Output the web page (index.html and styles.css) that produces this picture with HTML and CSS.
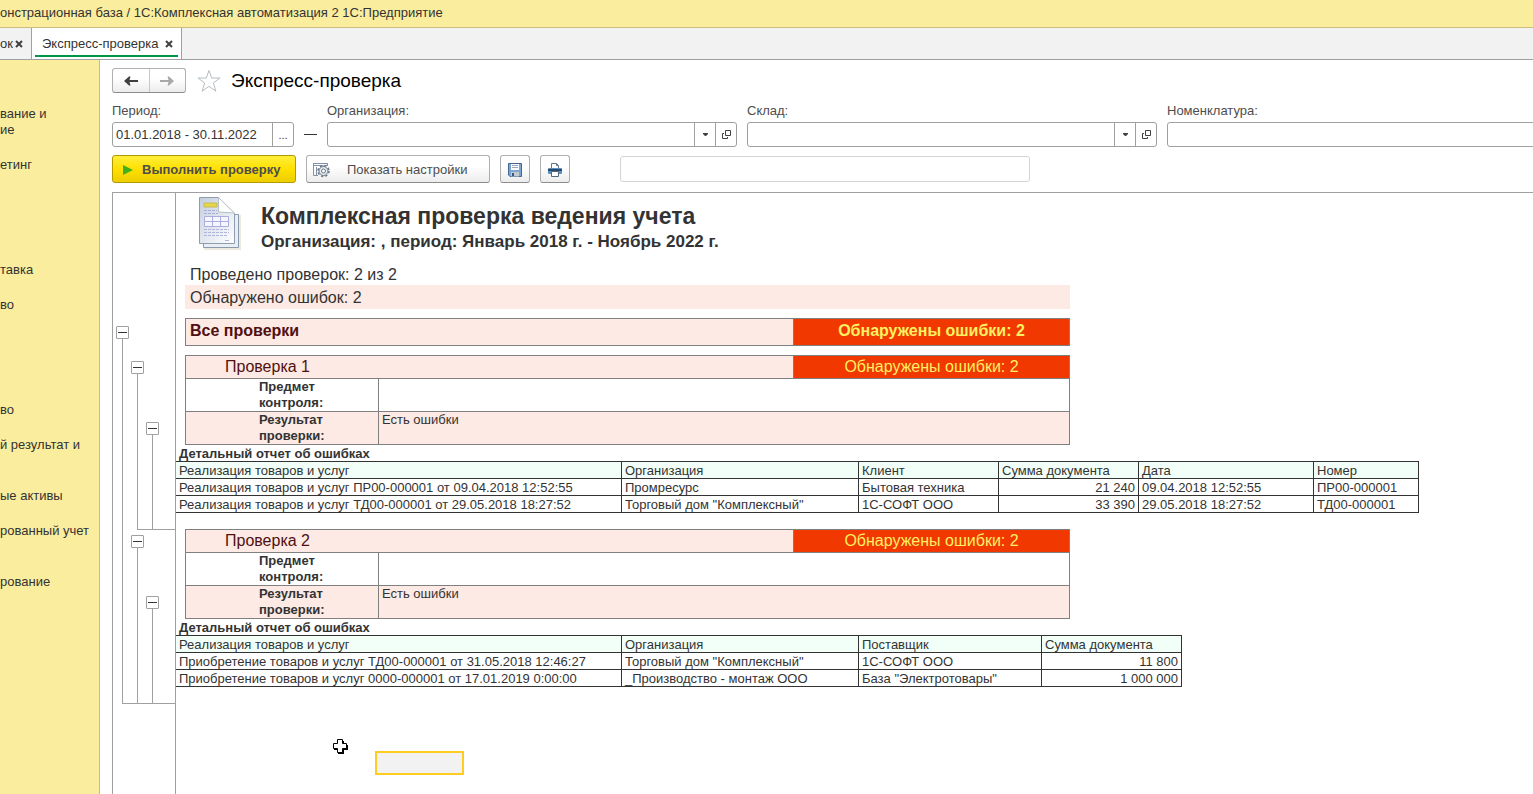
FILE: index.html
```html
<!DOCTYPE html>
<html lang="ru">
<head>
    <meta charset="UTF-8">
    <meta name="viewport" content="width=device-width, initial-scale=1.0">
    <title>Экспресс-проверка</title>
    <link rel="stylesheet" href="styles.css">
</head>
<body>
    <header class="titlebar">онстрационная база / 1С:Комплексная автоматизация 2 1С:Предприятие</header>

    <nav class="tabs">
        <div class="tab tab-cut">
            <span>ок</span>
            <button class="tab-close" aria-label="Закрыть"><svg width="8" height="8" viewBox="0 0 8 8"><path d="M1 1l6 6M7 1L1 7"/></svg></button>
        </div>
        <div class="tab active">
            <span>Экспресс-проверка</span>
            <button class="tab-close" aria-label="Закрыть"><svg width="8" height="8" viewBox="0 0 8 8"><path d="M1 1l6 6M7 1L1 7"/></svg></button>
        </div>
    </nav>

    <div class="workspace">
        <ul class="sidebar">
            <li><a href="#">вание и<br>ие</a></li>
            <li><a href="#">етинг</a></li>
            <li class="after-gap"><a href="#">тавка</a></li>
            <li><a href="#">во</a></li>
            <li class="after-gap"><a href="#">во</a></li>
            <li class="tall"><a href="#">й результат и</a></li>
            <li><a href="#">ые активы</a></li>
            <li class="tall"><a href="#">рованный учет</a></li>
            <li><a href="#">рование</a></li>
        </ul>

        <main class="main">
            <div class="heading">
                <div class="nav-buttons">
                    <button aria-label="Назад"><svg width="14" height="10" viewBox="0 0 14 10"><path d="M0 5l5-4.500h1.500L5.500 4H14v2H5.500l1 3.500H5z" fill="#404040"/></svg></button>
                    <button aria-label="Вперед"><svg width="14" height="10" viewBox="0 0 14 10"><path d="M14 5L9 .5H7.500L8.500 4H0v2h8.500l-1 3.500H9z" fill="#a8a8a8"/></svg></button>
                </div>
                <button class="star" aria-label="В избранное"><svg width="24" height="24" viewBox="0 0 24 24"><path d="M12 1.500l2.700 7.500h8.300l-6.600 5 2.400 8.200-6.800-4.900-6.800 4.900 2.400-8.200-6.600-5h8.300z" fill="#fff" stroke="#b4bcc2"/></svg></button>
                <h1>Экспресс-проверка</h1>
            </div>

            <div class="filters">
                <div class="field">
                    <label for="period">Период:</label>
                    <div class="period-row">
                        <div class="box period">
                            <input type="text" id="period" value="01.01.2018 - 30.11.2022">
                            <button class="pick" aria-label="Выбрать период">...</button>
                        </div>
                        <span class="dash"></span>
                    </div>
                </div>
                <div class="field">
                    <label for="org">Организация:</label>
                    <div class="box wide">
                        <input type="text" id="org">
                        <button aria-label="Список"><svg width="5" height="3" viewBox="0 0 5 3"><path d="M0 0h5v1L3 3H2L0 1z" fill="#404040"/></svg></button>
                        <button aria-label="Открыть"><svg width="9" height="9" viewBox="0 0 9 9"><path d="M3.500 .5h5v5h-5zM2 3.500H.5v5h5V7" fill="none" stroke="#404040"/></svg></button>
                    </div>
                </div>
                <div class="field">
                    <label for="store">Склад:</label>
                    <div class="box wide">
                        <input type="text" id="store">
                        <button aria-label="Список"><svg width="5" height="3" viewBox="0 0 5 3"><path d="M0 0h5v1L3 3H2L0 1z" fill="#404040"/></svg></button>
                        <button aria-label="Открыть"><svg width="9" height="9" viewBox="0 0 9 9"><path d="M3.500 .5h5v5h-5zM2 3.500H.5v5h5V7" fill="none" stroke="#404040"/></svg></button>
                    </div>
                </div>
                <div class="field">
                    <label for="item">Номенклатура:</label>
                    <div class="box wide">
                        <input type="text" id="item">
                    </div>
                </div>
            </div>

            <div class="toolbar">
                <button class="btn run"><svg width="10" height="10" viewBox="0 0 10 10"><path d="M0 0l10 5-10 5z" fill="#3fb11b"/></svg><span>Выполнить проверку</span></button>
                <button class="btn settings">
                    <svg width="17" height="16" viewBox="0 0 17 16">
                        <path d="M.5 1v12.500H5M.5 1.500H15M.5 3.500H15M14.500 1v3M3.500 5v9" fill="none" stroke="#8392ab"/>
                        <circle cx="10.500" cy="9" r="5.500" fill="#fff" stroke="#697685" stroke-width="1.500" stroke-dasharray="2.300 2.020"/>
                        <circle cx="10.500" cy="9" r="4.500" fill="#e8ebef" stroke="#697685"/>
                        <circle cx="10.500" cy="9" r="2" fill="#fff" stroke="#697685"/>
                    </svg>
                    <span>Показать настройки</span>
                </button>
                <button class="btn icon" aria-label="Сохранить">
                    <svg width="14" height="14" viewBox="0 0 14 14">
                        <path d="M.5 .5h13v13H2L.5 12z" fill="#7ba6d3" stroke="#45678f"/>
                        <path d="M3 1h8v6H3z" fill="#fff"/>
                        <path d="M4 2.500h6M4 4.500h6" stroke="#9aa7b5"/>
                        <path d="M3 9h8v4.500H3z" fill="#c3cad0"/>
                        <path d="M4 10h2v3H4z" fill="#37597f"/>
                    </svg>
                </button>
                <button class="btn icon" aria-label="Печать">
                    <svg width="14" height="14" viewBox="0 0 14 14">
                        <path d="M3.500 5V.5h5l2 2V5" fill="#fff" stroke="#66788c"/>
                        <path d="M8.500 .5v2h2" fill="none" stroke="#66788c"/>
                        <rect y="5" width="14" height="6" rx="1" fill="#5b8fbf"/>
                        <path d="M0 6h14v2H0z" fill="#27486f"/>
                        <path d="M3.500 8.500h7v5h-7z" fill="#fff" stroke="#52667d"/>
                    </svg>
                </button>
                <input type="text" class="status" aria-label="Состояние" readonly>
            </div>

            <div class="report">
                <div class="outline">
                    <div class="node">
                        <button class="toggle" aria-label="Свернуть"></button>
                        <div class="branch closed">
                            <div class="node check-node">
                                <button class="toggle" aria-label="Свернуть"></button>
                                <div class="branch closed">
                                    <div class="node detail-node">
                                        <button class="toggle" aria-label="Свернуть"></button>
                                        <div class="branch leaf"></div>
                                    </div>
                                </div>
                            </div>
                            <div class="node check-node">
                                <button class="toggle" aria-label="Свернуть"></button>
                                <div class="branch">
                                    <div class="node detail-node">
                                        <button class="toggle" aria-label="Свернуть"></button>
                                        <div class="branch leaf"></div>
                                    </div>
                                </div>
                            </div>
                        </div>
                    </div>
                </div>

                <div class="sheet">
                    <div class="report-head">
                        <svg width="46" height="56" viewBox="0 0 46 56">
                            <defs>
                                <linearGradient id="paper" x1="0" y1="0" x2="1" y2="1">
                                    <stop offset="0" stop-color="#c3cfdf"/>
                                    <stop offset="1" stop-color="#fff"/>
                                </linearGradient>
                            </defs>
                            <path d="M7 19h37v35H7z" fill="#ece9de"/>
                            <path d="M6.500 18.500h35v33h-35z" fill="#e9eef4" stroke="#8a9aac"/>
                            <path d="M2.500 1.500h19l16 16v30h-35z" fill="url(#paper)" stroke="#8d9cae"/>
                            <path d="M21.500 1.500v14.500l16 1z" fill="#fff" stroke="#b5bfca"/>
                            <path d="M7 7h13v4H7z" fill="#e6d648" stroke="#c5b956"/>
                            <path d="M7 14.500h13M7 17.500h14" stroke="#a9acd8" stroke-dasharray="3 1"/>
                            <path d="M7.500 20.500h24v10h-24zM7.500 25.500h24M15.500 20.500v10M23.500 20.500v10" fill="#f5f6ff" stroke="#abaedc"/>
                            <path d="M7 33.500h25M7 36.500h25M7 39.500h23" stroke="#b1b4dd" stroke-dasharray="3 1"/>
                            <path d="M28 44.500h4" stroke="#b1b4dd"/>
                        </svg>
                        <div>
                            <h2>Комплексная проверка ведения учета</h2>
                            <p class="subtitle">Организация: , период: Январь 2018 г. - Ноябрь 2022 г.</p>
                        </div>
                    </div>

                    <p class="total">Проведено проверок: 2 из 2</p>
                    <p class="total found">Обнаружено ошибок: 2</p>

                    <table class="check summary">
                        <colgroup><col class="c-label"><col class="c-value"><col class="c-state"></colgroup>
                        <tr><th colspan="2">Все проверки</th><td class="state">Обнаружены ошибки: 2</td></tr>
                    </table>

                    <section class="group">
                        <table class="check">
                            <colgroup><col class="c-label"><col class="c-value"><col class="c-state"></colgroup>
                            <tr class="name"><th colspan="2">Проверка 1</th><td class="state">Обнаружены ошибки: 2</td></tr>
                            <tr><th>Предмет контроля:</th><td colspan="2"></td></tr>
                            <tr class="result"><th>Результат проверки:</th><td colspan="2">Есть ошибки</td></tr>
                        </table>
                        <h3>Детальный отчет об ошибках</h3>
                        <table class="detail sales">
                            <colgroup><col class="d-doc"><col class="d-org"><col class="d-mid"><col class="d-mid"><col class="d-date"><col class="d-num"></colgroup>
                            <tr><th>Реализация товаров и услуг</th><th>Организация</th><th>Клиент</th><th>Сумма документа</th><th>Дата</th><th>Номер</th></tr>
                            <tr><td>Реализация товаров и услуг ПР00-000001 от 09.04.2018 12:52:55</td><td>Промресурс</td><td>Бытовая техника</td><td class="num">21 240</td><td>09.04.2018 12:52:55</td><td>ПР00-000001</td></tr>
                            <tr><td>Реализация товаров и услуг ТД00-000001 от 29.05.2018 18:27:52</td><td>Торговый дом "Комплексный"</td><td>1С-СОФТ ООО</td><td class="num">33 390</td><td>29.05.2018 18:27:52</td><td>ТД00-000001</td></tr>
                        </table>
                    </section>

                    <section class="group">
                        <table class="check">
                            <colgroup><col class="c-label"><col class="c-value"><col class="c-state"></colgroup>
                            <tr class="name"><th colspan="2">Проверка 2</th><td class="state">Обнаружены ошибки: 2</td></tr>
                            <tr><th>Предмет контроля:</th><td colspan="2"></td></tr>
                            <tr class="result"><th>Результат проверки:</th><td colspan="2">Есть ошибки</td></tr>
                        </table>
                        <h3>Детальный отчет об ошибках</h3>
                        <table class="detail purchases">
                            <colgroup><col class="d-doc"><col class="d-org"><col class="d-supplier"><col class="d-mid"></colgroup>
                            <tr><th>Реализация товаров и услуг</th><th>Организация</th><th>Поставщик</th><th>Сумма документа</th></tr>
                            <tr><td>Приобретение товаров и услуг ТД00-000001 от 31.05.2018 12:46:27</td><td>Торговый дом "Комплексный"</td><td>1С-СОФТ ООО</td><td class="num">11 800</td></tr>
                            <tr><td>Приобретение товаров и услуг 0000-000001 от 17.01.2019 0:00:00</td><td>_Производство - монтаж ООО</td><td>База "Электротовары"</td><td class="num">1 000 000</td></tr>
                        </table>
                    </section>

                    <div class="selected-cell"></div>
                </div>
            </div>
        </main>
    </div>

    <svg class="cursor" width="16" height="16" viewBox="0 0 16 16"><path d="M6 3h6v4h4v5h-4v4H6v-4H2V7h4z" fill="#000"/><path d="M5.500 1.500h5v4h4v5h-4v4h-5v-4h-4v-5h4z" fill="#fff" stroke="#000"/></svg>
</body>
</html>
```

FILE: styles.css
```css
* {
    box-sizing: border-box;
}
body {
    margin: 0;
    height: 100vh;
    display: flex;
    flex-direction: column;
    overflow: hidden;
    font-family: 'Liberation Sans', Arial, sans-serif;
    font-size: 13px;
    line-height: 16px;
    color: #333;
    background: #fff;
}
h1, h2, h3, p, ul {
    margin: 0;
    padding: 0;
}
button, input {
    font: inherit;
    color: inherit;
    margin: 0;
    padding: 0;
    border: none;
    background: none;
}
button {
    display: flex;
    align-items: center;
    justify-content: center;
    cursor: pointer;
}
input {
    min-width: 0;
    outline: none;
}
.titlebar {
    flex: none;
    height: 28px;
    padding-top: 5px;
    background: #fbed9e;
    border-bottom: 1px solid #c9be7e;
    white-space: nowrap;
}

/* tabs */
.tabs {
    flex: none;
    display: flex;
    height: 32px;
    background: #f2f2f2;
    border-bottom: 1px solid #a0a0a0;
}
.tab {
    display: flex;
    align-items: center;
    justify-content: space-between;
    padding: 0 8px;
    border-right: 1px solid #a0a0a0;
    white-space: nowrap;
}
.tab-cut {
    width: 32px;
    padding: 0 8px 0 0;
}
.tab.active {
    position: relative;
    width: 150px;
    padding-left: 10px;
    background: #fff;
}
.tab.active::after {
    content: '';
    position: absolute;
    left: 3px;
    right: 3px;
    bottom: 2px;
    height: 2px;
    background: #009646;
}
.tab-close {
    flex: none;
}
.tab-close path {
    stroke: #404040;
    stroke-width: 2;
}

/* sections panel */
.workspace {
    flex: 1;
    min-height: 0;
    display: flex;
}
.sidebar {
    flex: none;
    width: 100px;
    padding-top: 46px;
    list-style: none;
    overflow: hidden;
    background: #fbed9e;
    border-right: 1px solid #c9be7e;
}
.sidebar li {
    padding-bottom: 19px;
    white-space: nowrap;
}
.sidebar .tall {
    padding-bottom: 35px;
}
.sidebar .after-gap {
    margin-top: 70px;
}
.sidebar a {
    color: inherit;
    text-decoration: none;
}
.main {
    flex: 1;
    min-width: 0;
    display: flex;
    flex-direction: column;
    padding: 8px 0 0 12px;
    overflow: hidden;
}

/* form header */
.heading {
    display: flex;
    align-items: center;
    height: 25px;
}
.nav-buttons {
    display: flex;
    width: 74px;
    height: 25px;
    border: 1px solid #b0b0b0;
    border-bottom-color: #8c8c8c;
    border-radius: 3px;
    background: linear-gradient(#fff 40%, #ececec);
}
.nav-buttons button {
    flex: 1;
}
.nav-buttons button + button {
    border-left: 1px solid #c8c8c8;
}
.star {
    margin: 0 10px 0 11px;
}
h1 {
    font-size: 19px;
    line-height: 24px;
    font-weight: normal;
    color: #000;
}
.filters {
    display: flex;
    gap: 10px;
    margin-top: 10px;
}
.field {
    flex: none;
}
.field label {
    display: block;
    height: 19px;
    color: #4d4d4d;
}
.box {
    display: flex;
    height: 25px;
    border: 1px solid #a0a0a0;
    border-radius: 3px;
    background: #fff;
}
.box input {
    flex: 1;
    padding-left: 3px;
}
.box button {
    width: 21px;
    border-left: 1px solid #a0a0a0;
}
.box .pick {
    font-size: 11px;
}
.wide {
    width: 410px;
}
.period {
    width: 182px;
}
.period-row {
    display: flex;
    align-items: center;
    gap: 10px;
}
.dash {
    width: 13px;
    height: 1px;
    background: #333;
}

/* commands */
.toolbar {
    display: flex;
    align-items: center;
    gap: 10px;
    margin-top: 8px;
}
.btn {
    height: 28px;
    padding-top: 1px;
    color: #4d4d4d;
    border: 1px solid #b0b0b0;
    border-bottom-color: #8c8c8c;
    border-radius: 3px;
    background: linear-gradient(#fff 40%, #ececec);
}
.run, .settings {
    width: 184px;
    justify-content: flex-start;
    padding-left: 10px;
    gap: 9px;
}
.settings {
    padding-left: 6px;
    gap: 17px;
}
.run {
    font-weight: bold;
    border-color: #b09a00;
    background: linear-gradient(#ffee3c, #ffe000 50%, #edce00);
}
.icon {
    width: 30px;
}
.status {
    width: 410px;
    height: 26px;
    margin-left: 40px;
    border: 1px solid #d4d4d4;
    border-radius: 3px;
}

/* report */
.report {
    flex: 1;
    display: flex;
    margin-top: 9px;
    border-top: 1px solid #a0a0a0;
    border-left: 1px solid #a0a0a0;
}
.outline {
    flex: none;
    width: 63px;
    padding: 133px 0 0 3px;
    border-right: 1px solid #a0a0a0;
}
.toggle {
    width: 13px;
    height: 13px;
    border: 1px solid #a0a0a0;
    border-radius: 1px;
    background: #fff;
}
.toggle::before {
    content: '';
    width: 9px;
    height: 1px;
    background: #333;
}
.branch {
    margin-left: 6px;
    border-left: 1px solid #a0a0a0;
}
.branch.closed {
    border-bottom: 1px solid #a0a0a0;
}
.branch.leaf {
    height: 94px;
}
.check-node {
    padding: 22px 0 0 8px;
}
.check-node + .check-node {
    padding-top: 5px;
}
.detail-node {
    padding: 48px 0 0 8px;
}
.sheet {
    flex: 1;
    min-width: 0;
}
.report-head {
    display: flex;
    gap: 18px;
    height: 69px;
    padding: 3px 0 0 21px;
}
h2 {
    margin-top: 6px;
    font-size: 23px;
    line-height: 28px;
}
.subtitle {
    font-size: 17px;
    line-height: 24px;
    font-weight: bold;
}
.total {
    width: 885px;
    height: 23px;
    margin-left: 9px;
    padding-left: 5px;
    font-size: 16px;
    line-height: 25px;
}
.total.found {
    height: 24px;
    background: #fdeae4;
}
table {
    table-layout: fixed;
    border-spacing: 0;
}
th, td {
    padding: 0;
    text-align: left;
    vertical-align: top;
}
.check {
    width: 885px;
    margin-left: 9px;
    border-left: 1px solid #808080;
    border-top: 1px solid #808080;
}
.check th, .check td {
    border-right: 1px solid #808080;
    border-bottom: 1px solid #808080;
}
.c-label {
    width: 193px;
}
.c-value {
    width: 415px;
}
.c-state {
    width: 276px;
}
.summary {
    margin-top: 9px;
    font-size: 16px;
    line-height: 24px;
}
.check.summary th, .check.summary td {
    height: 27px;
    background: #fdeae4;
    color: #501010;
    padding-left: 4px;
    font-weight: bold;
}
.name {
    font-size: 16px;
    line-height: 22px;
}
.check .name th {
    padding-left: 39px;
    font-weight: normal;
    color: #501010;
    background: #fdeae4;
}
.check .state, .check.summary .state {
    padding: 0;
    text-align: center;
    color: #fff060;
    background: #f03800;
}
.check th {
    padding: 0 45px 0 73px;
}
.check td {
    padding-left: 3px;
}
.result {
    background: #fdeae4;
}
.summary + .group {
    margin-top: 9px;
}
.group + .group {
    margin-top: 16px;
}
h3 {
    padding: 1px 0 0 3px;
    font-size: 13px;
    line-height: 15px;
}
.detail {
    border-bottom: 1px solid #333;
}
.detail th, .detail td {
    padding: 1px 3px 0;
    line-height: 15px;
    border-top: 1px solid #333;
    border-right: 1px solid #333;
    white-space: nowrap;
}
.detail th {
    font-weight: normal;
    background: #f2fff9;
}
.detail .num {
    text-align: right;
}
.sales {
    width: 1243px;
}
.purchases {
    width: 1006px;
}
.d-doc {
    width: 446px;
}
.d-org {
    width: 237px;
}
.d-mid {
    width: 140px;
}
.d-date {
    width: 175px;
}
.d-num {
    width: 105px;
}
.d-supplier {
    width: 183px;
}
.selected-cell {
    width: 89px;
    height: 24px;
    margin: 64px 0 0 199px;
    border: 2px solid #ffcc20;
    background: #f2f2f2;
}
.cursor {
    position: absolute;
    left: 332px;
    top: 738px;
}
```
